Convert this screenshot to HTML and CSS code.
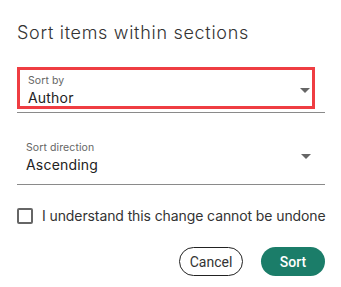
FILE: index.html
```html
<!DOCTYPE html>
<html>
<head>
<meta charset="utf-8">
<link rel="stylesheet" href="styles.css">
</head>
<body>
<div class="dialog">
  <h1 class="title">Sort items within sections</h1>
  <div class="field field-first">
    <div class="highlight">
      <div class="field-text">
        <span class="label">Sort by</span>
        <span class="value">Author</span>
      </div>
      <span class="arrow"></span>
    </div>
  </div>
  <div class="field field-second">
    <div class="field-text">
      <span class="label">Sort direction</span>
      <span class="value">Ascending</span>
    </div>
    <span class="arrow"></span>
  </div>
  <label class="check">
    <span class="box"></span>
    <span class="check-text">I understand this change cannot be undone</span>
  </label>
  <div class="actions">
    <button class="btn btn-cancel">Cancel</button>
    <button class="btn btn-sort">Sort</button>
  </div>
</div>
</body>
</html>
```
FILE: styles.css
```css
html, body {
  margin: 0;
  padding: 0;
  background: #ffffff;
}
body {
  font-family: "Inter", "Noto Sans", sans-serif;
  color: #222;
}
.dialog {
  width: 308px;
  padding: 0 16px 0 17px;
}
.title {
  margin: 0;
  padding-top: 23px;
  font-size: 18px;
  font-weight: 300;
  line-height: 20px;
  color: #333;
  letter-spacing: 0.7px;
  white-space: nowrap;
}
.field {
  border-bottom: 1px solid #8a8a8a;
}
.field-first {
  margin-top: 24px;
  padding-bottom: 3px;
}
.highlight {
  width: 298px;
  height: 42px;
  box-sizing: border-box;
  border: 3px solid #ef3d42;
  display: flex;
  align-items: flex-start;
  justify-content: space-between;
  padding: 4px 2px 0 8px;
}
.field-text {
  display: flex;
  flex-direction: column;
}
.label {
  font-size: 10.5px;
  line-height: 13px;
  color: #666;
  letter-spacing: 0.1px;
}
.value {
  font-size: 14px;
  line-height: 20px;
  color: #222;
  margin-top: 1px;
  letter-spacing: 0.2px;
}
.arrow {
  width: 0;
  height: 0;
  border-left: 5px solid transparent;
  border-right: 5px solid transparent;
  border-top: 5px solid #666;
  margin-top: 14px;
}
.field-second {
  margin-top: 28px;
  display: flex;
  justify-content: space-between;
  align-items: flex-start;
  padding: 0 14px 9px 9px;
}
.field-second .arrow {
  margin-top: 13px;
}
.check {
  display: flex;
  align-items: center;
  margin-top: 22px;
  gap: 9px;
}
.box {
  width: 12px;
  height: 12px;
  border: 2px solid #666;
  border-radius: 2px;
  flex: none;
}
.check-text {
  font-size: 14px;
  line-height: 18px;
  color: #333;
  white-space: nowrap;
  letter-spacing: -0.1px;
}
.actions {
  display: flex;
  justify-content: flex-end;
  gap: 18px;
  margin-top: 22px;
}
.btn {
  font-family: "Roboto", "Liberation Sans", sans-serif;
  font-size: 14px;
  height: 29px;
  border-radius: 15px;
  padding: 0;
  cursor: pointer;
}
.btn-cancel {
  width: 64px;
  background: #fff;
  border: 1px solid #222;
  color: #333;
}
.btn-sort {
  width: 64px;
  background: #1b7d69;
  border: none;
  color: #fff;
  font-weight: 500;
}
```
